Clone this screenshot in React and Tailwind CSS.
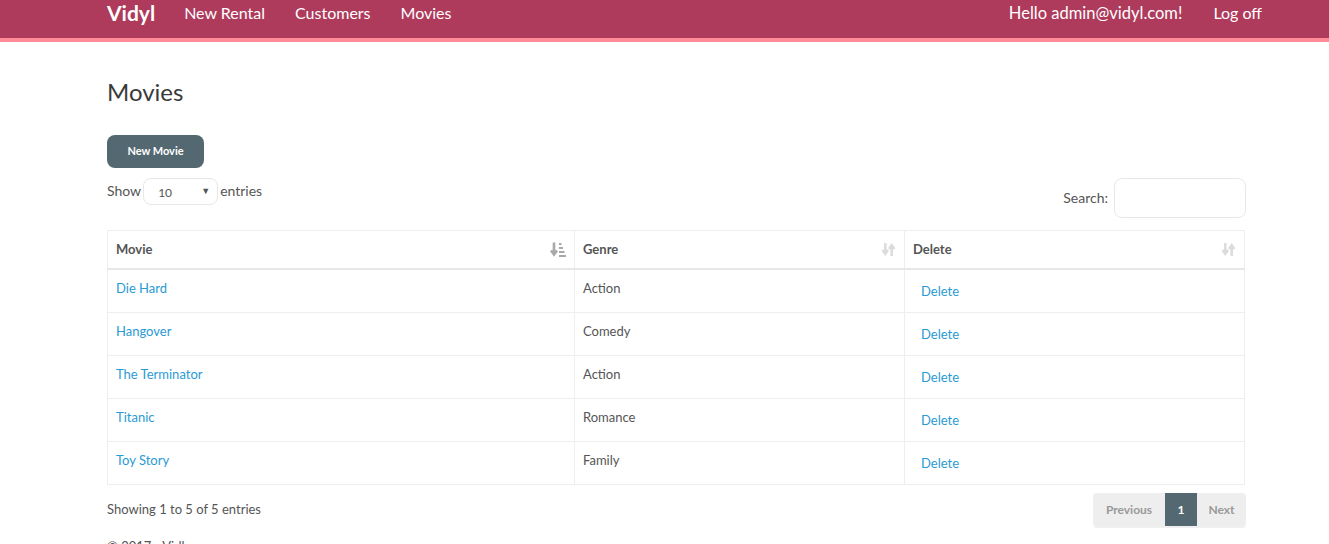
import { useState } from 'react'

const movies = [
  { name: 'Die Hard', genre: 'Action' },
  { name: 'Hangover', genre: 'Comedy' },
  { name: 'The Terminator', genre: 'Action' },
  { name: 'Titanic', genre: 'Romance' },
  { name: 'Toy Story', genre: 'Family' },
]

function SortBoth() {
  return (
    <svg width="15" height="15" viewBox="0 0 14 14" className="text-[#dcdcdc]">
      <path d="M4 1v9M1.5 7.5L4 11l2.5-3.5" stroke="currentColor" strokeWidth="2.4" fill="none" />
      <path d="M10 13V4M7.5 6.5L10 3l2.5 3.5" stroke="currentColor" strokeWidth="2.4" fill="none" />
    </svg>
  )
}

function SortAsc() {
  return (
    <svg width="16" height="15" viewBox="0 0 16 15" className="text-[#a9a9a9]">
      <path d="M4 0.5v11M1 8.5L4 12.5l3-4" stroke="currentColor" strokeWidth="2.6" fill="none" />
      <rect x="9" y="1" width="2.5" height="2" fill="currentColor" />
      <rect x="9" y="5" width="4" height="2" fill="currentColor" />
      <rect x="9" y="9" width="5.5" height="2" fill="currentColor" />
      <rect x="9" y="13" width="7" height="2" fill="currentColor" />
    </svg>
  )
}

export default function App() {
  const [search, setSearch] = useState('')
  const rows = movies.filter((m) => m.name.toLowerCase().includes(search.toLowerCase()))

  return (
    <div className="h-screen overflow-hidden bg-white text-[14px] text-[#555] font-['Lato','Liberation_Sans',sans-serif]">
      <nav className="bg-[#ae3a5c] border-b-4 border-[#ff8a98]">
        <div className="ml-[107px] w-[1155px] h-[38px] flex items-start pt-px text-white">
          <span className="text-[21px] font-bold leading-[24px] mr-[29px]">Vidyl</span>
          <div className="flex gap-[30px] text-[16px] leading-[22px] pt-px">
            <a href="#">New Rental</a>
            <a href="#">Customers</a>
            <a href="#">Movies</a>
          </div>
          <div className="ml-auto flex gap-[31px] text-[16px] leading-[22px] pt-px">
            <span className="text-[16.5px]">Hello admin@vidyl.com!</span>
            <a href="#">Log off</a>
          </div>
        </div>
      </nav>

      <main className="ml-[107px] w-[1139px]">
        <h2 className="mt-[37px] text-[24px] leading-[26px] text-[#3a3a3a]">Movies</h2>

        <button className="mt-[30px] h-[33px] w-[97px] rounded-[8px] bg-[#536870] text-white text-[11px] font-bold">
          New Movie
        </button>

        <div className="flex justify-between items-start mt-[10px]">
          <div className="flex items-center">
            <span className="-mt-[3px]">Show</span>
            <div className="relative mx-[2px] h-[27px] w-[75px] rounded-[8px] border border-[#e7e7e7] text-[12px] text-[#555]">
              <span className="absolute left-[14px] top-[5px]">10</span>
              <span className="absolute right-[7px] top-[5px] text-[9px]">▼</span>
            </div>
            <span className="-mt-[3px]">entries</span>
          </div>
          <div className="flex items-center">
            <label className="mr-[6px] -mt-px">Search:</label>
            <input
              value={search}
              onChange={(e) => setSearch(e.target.value)}
              className="h-[40px] w-[132px] rounded-[8px] border border-[#e7e7e7] px-3 outline-none"
            />
          </div>
        </div>

        <table className="mt-[12px] w-[1138px] border-collapse border border-[#eee] table-fixed">
          <thead>
            <tr className="border-b-2 border-[#e7e7e7]">
              <th className="w-[467px] border-r border-[#eee] px-[8px] pt-[8px] pb-[9px] text-left text-[13px] leading-[20px] font-bold text-[#555]">
                <div className="flex items-center justify-between">
                  <span>Movie</span>
                  <SortAsc />
                </div>
              </th>
              <th className="w-[330px] border-r border-[#eee] px-[8px] pt-[8px] pb-[9px] text-left text-[13px] leading-[20px] font-bold text-[#555]">
                <div className="flex items-center justify-between">
                  <span>Genre</span>
                  <SortBoth />
                </div>
              </th>
              <th className="px-[8px] pt-[8px] pb-[9px] text-left text-[13px] leading-[20px] font-bold text-[#555]">
                <div className="flex items-center justify-between">
                  <span>Delete</span>
                  <SortBoth />
                </div>
              </th>
            </tr>
          </thead>
          <tbody>
            {rows.map((m) => (
              <tr key={m.name} className="border-t border-[#eee] first:border-t-0">
                <td className="border-r border-[#eee] px-[8px] pt-[8px] pb-[8px] align-top leading-[20px] text-[13px]">
                  <a href="#" className="text-[#2a9ad4]">{m.name}</a>
                </td>
                <td className="border-r border-[#eee] px-[8px] pt-[8px] align-top leading-[20px] text-[13px]">
                  {m.genre}
                </td>
                <td className="px-[8px] pt-[8px] pb-[8px] align-top">
                  <button className="h-[26px] px-[8px] text-[13px] leading-[20px] text-[#2a9ad4]">Delete</button>
                </td>
              </tr>
            ))}
          </tbody>
        </table>

        <div className="flex items-center justify-between mt-[8px]">
          <span className="text-[13px]">Showing 1 to {rows.length} of 5 entries</span>
          <div className="flex h-[33px] rounded-[4px] overflow-hidden shadow-[0_2px_0_rgba(0,0,0,0.06)] text-[12px] font-bold">
            <span className="w-[72px] flex items-center justify-center bg-[#eee] text-[#999]">Previous</span>
            <span className="w-[32px] flex items-center justify-center bg-[#536870] text-white">1</span>
            <span className="w-[49px] flex items-center justify-center bg-[#eee] text-[#999]">Next</span>
          </div>
        </div>

        <footer className="mt-[10px] text-[13px] leading-[20px]">© 2017 - Vidly</footer>
      </main>
    </div>
  )
}
